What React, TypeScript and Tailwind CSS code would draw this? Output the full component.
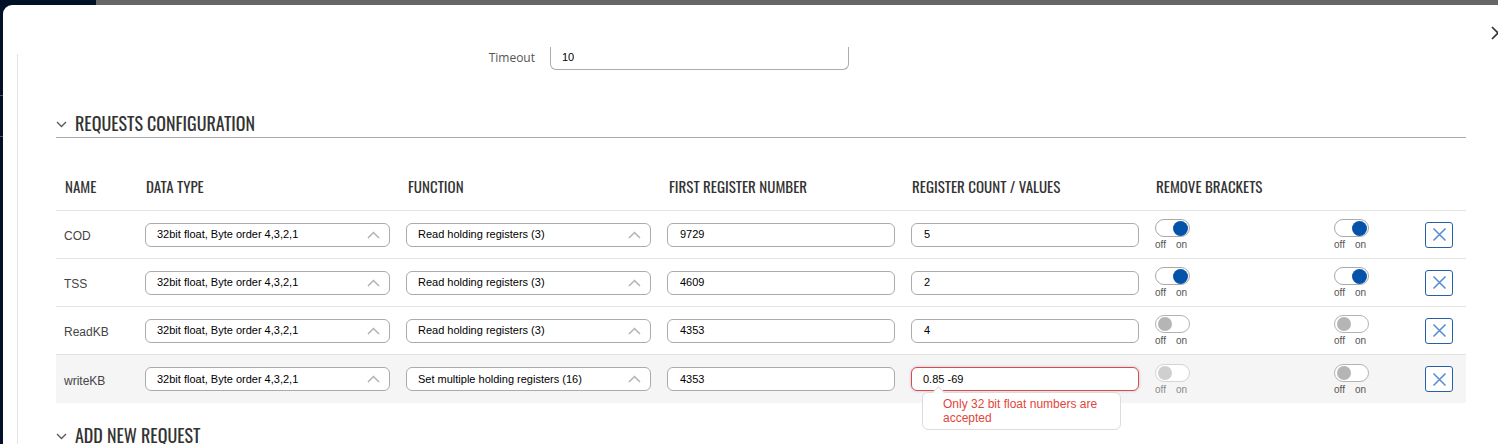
import React from "react";

const HEAD = "font-['Oswald','Liberation_Sans_Narrow','Roboto_Condensed','Liberation_Sans',sans-serif]";
const BODY = "font-['Liberation_Sans','Arial',sans-serif]";

function ChevronUp() {
  return (
    <svg width="13" height="8" viewBox="0 0 13 8" fill="none" className="shrink-0">
      <path d="M1 7 L6.5 1.5 L12 7" stroke="#b3b3b3" strokeWidth="1.5" />
    </svg>
  );
}

function ChevronDown() {
  return (
    <svg width="11" height="7" viewBox="0 0 11 7" fill="none" className="shrink-0">
      <path d="M1 1 L5.5 5.5 L10 1" stroke="#555" strokeWidth="1.3" />
    </svg>
  );
}

function Select({ value }: { value: string }) {
  return (
    <div className="h-[24px] w-full rounded-[6px] border border-[#ababab] bg-white flex items-center pl-[11px] pr-[9px] justify-between">
      <span className={`${BODY} text-[11px] text-black`}>{value}</span>
      <ChevronUp />
    </div>
  );
}

function Input({ value, error }: { value: string; error?: boolean }) {
  return (
    <div
      className={
        error
          ? "h-[24px] w-full rounded-[6px] border border-[#e5473a] bg-white flex items-center pl-[11px] shadow-[0_0_3px_rgba(80,140,230,0.45)]"
          : "h-[24px] w-full rounded-[6px] border border-[#ababab] bg-white flex items-center pl-[12px]"
      }
    >
      <span className={`${BODY} text-[11px] text-black`}>{value}</span>
    </div>
  );
}

function Toggle({ on, faded }: { on: boolean; faded?: boolean }) {
  return (
    <div className="flex flex-col items-start">
      <div
        className={
          faded
            ? "w-[35px] h-[18px] rounded-full border border-[#d4d4d4] bg-white flex items-center px-[1px] justify-start"
            : on
            ? "w-[35px] h-[18px] rounded-full border border-[#a9a9a9] bg-white flex items-center px-[1px] justify-end"
            : "w-[35px] h-[18px] rounded-full border border-[#b3b3b3] bg-white flex items-center px-[1px] justify-start"
        }
      >
        <div
          className={
            faded
              ? "w-[14px] h-[14px] rounded-full bg-[#cfcfcf] ml-[1px]"
              : on
              ? "w-[15px] h-[15px] rounded-full bg-[#0553a8]"
              : "w-[14px] h-[14px] rounded-full bg-[#b5b5b5] ml-[1px]"
          }
        />
      </div>
      <div className={`${BODY} flex gap-[10px] text-[10px] leading-[11px] mt-[2px] ${faded ? "text-[#8a8a8a]" : "text-[#555]"}`}>
        <span>off</span>
        <span>on</span>
      </div>
    </div>
  );
}

function DeleteButton() {
  return (
    <div className="w-[28px] h-[26px] rounded-[3px] border-[1.5px] border-[#2561aa] bg-white flex items-center justify-center">
      <svg width="15" height="15" viewBox="0 0 15 15" fill="none">
        <path d="M1.5 1.5 L13.5 13.5 M13.5 1.5 L1.5 13.5" stroke="#5a8ed3" strokeWidth="1.6" />
      </svg>
    </div>
  );
}

type Row = {
  name: string;
  fn: string;
  first: string;
  count: string;
  t1: boolean;
  t2: boolean;
  last?: boolean;
};

const rows: Row[] = [
  { name: "COD", fn: "Read holding registers (3)", first: "9729", count: "5", t1: true, t2: true },
  { name: "TSS", fn: "Read holding registers (3)", first: "4609", count: "2", t1: true, t2: true },
  { name: "ReadKB", fn: "Read holding registers (3)", first: "4353", count: "4", t1: false, t2: false },
  { name: "writeKB", fn: "Set multiple holding registers (16)", first: "4353", count: "0.85 -69", t1: false, t2: false, last: true },
];

const GRID = "grid grid-cols-[81px_261px_261px_244px_244px_179px_91px_49px] items-center";

function SectionHeading({ title }: { title: string }) {
  return (
    <div className="h-[30px] flex items-center border-b border-[#a8a8a8]">
      <div className="w-[19px] flex items-center pt-[3px]">
        <ChevronDown />
      </div>
      <span className={`${HEAD} text-[18px] text-[#333] leading-none`}>{title}</span>
    </div>
  );
}

export default function App() {
  return (
    <div className="w-[1498px] h-[444px] overflow-hidden relative bg-[#021029] flex flex-col">
      <div className="h-[5px] flex shrink-0">
        <div className="w-[96px] bg-[#011029]" />
        <div className="flex-1 bg-[#666666]" />
      </div>
      <div className="flex-1 flex min-h-0">
        <div className="w-[3px] bg-[#021029] flex flex-col">
          <div className="h-[90px]" />
          <div className="h-[1px] bg-[#4a5568]" />
          <div className="h-[40px]" />
          <div className="h-[1px] bg-[#4a5568]" />
        </div>
        <div className="flex-1 bg-white rounded-tl-[9px] pt-[42px] min-h-0 w-[1520px]">
          <div className="ml-[14px] h-full overflow-hidden flex">
            <div className="w-[1px] flex flex-col shrink-0">
              <div className="h-[7px]" />
              <div className="flex-1 bg-[#e3e3e3]" />
            </div>
            <div className="w-[1410px] ml-[38px] shrink-0">
              {/* Timeout row */}
              <div className="flex items-center -mt-[2px]">
                <div className="w-[479px] text-right font-['Open_Sans',sans-serif] text-[12px] leading-[12px] pt-[1px] text-[#555]">Timeout</div>
                <div className="ml-[15px] w-[299px] h-[25px] rounded-b-[6px] border border-[#ababab] border-t-transparent bg-white flex items-center pl-[11px]">
                  <span className={`${BODY} text-[11px] text-black`}>10</span>
                </div>
              </div>

              <div className="mt-[38px]">
                <SectionHeading title="REQUESTS CONFIGURATION" />
              </div>

              {/* Table */}
              <div className="mt-[25px]">
                <div className={`${GRID} h-[48px] border-b border-[#e3e3e3] ${HEAD} text-[15px] text-[#333]`}>
                  <div className="pl-[9px]">NAME</div>
                  <div className="pl-[9px]">DATA TYPE</div>
                  <div className="pl-[10px]">FUNCTION</div>
                  <div className="pl-[10px]">FIRST REGISTER NUMBER</div>
                  <div className="pl-[9px]">REGISTER COUNT / VALUES</div>
                  <div className="pl-[9px]">REMOVE BRACKETS</div>
                  <div />
                  <div />
                </div>
                {rows.map((r) => (
                  <div
                    key={r.name}
                    className={
                      r.last
                        ? `${GRID} h-[48px] bg-[#f5f5f5]`
                        : `${GRID} h-[48px] border-b border-[#e3e3e3]`
                    }
                  >
                    <div className={`pl-[8px] pt-[3px] ${BODY} text-[12px] text-[#444]`}>{r.name}</div>
                    <div className="px-[8px]">
                      <Select value="32bit float, Byte order 4,3,2,1" />
                    </div>
                    <div className="px-[8px]">
                      <Select value={r.fn} />
                    </div>
                    <div className="px-[8px]">
                      <Input value={r.first} />
                    </div>
                    <div className="px-[8px] relative">
                      <Input value={r.count} error={r.last} />
                      {r.last && (
                        <div className="absolute left-[19px] top-[25px] w-[199px] h-[38px] rounded-[6px] border border-[#dcdcdc] bg-white z-10 pl-[20px] pt-[4px]">
                          <div className="absolute -top-[5px] left-[11px] w-[9px] h-[9px] rotate-45 bg-white border-t border-l border-[#dcdcdc]" />
                          <div className={`${BODY} text-[12px] leading-[14px] text-[#e2463a] relative`}>
                            Only 32 bit float numbers are
                            <br />
                            accepted
                          </div>
                        </div>
                      )}
                    </div>
                    <div className="pl-[8px]">
                      <Toggle on={r.t1} faded={r.last} />
                    </div>
                    <div className="pl-[8px]">
                      <Toggle on={r.t2} />
                    </div>
                    <div className="pl-[8px]">
                      <DeleteButton />
                    </div>
                  </div>
                ))}
              </div>

              <div className="mt-[17px]">
                <SectionHeading title="ADD NEW REQUEST" />
              </div>
            </div>
          </div>
        </div>
      </div>
      <svg className="absolute left-[1491px] top-[26px]" width="14" height="14" viewBox="0 0 14 14" fill="none">
        <path d="M1 1 L13 13 M13 1 L1 13" stroke="#333" strokeWidth="1.6" />
      </svg>
    </div>
  );
}
